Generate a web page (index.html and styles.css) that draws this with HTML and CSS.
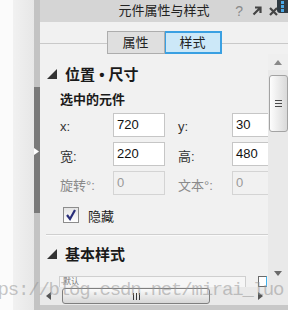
FILE: index.html
```html
<!DOCTYPE html>
<html lang="zh-CN">
<head>
    <meta charset="UTF-8">
    <title>元件属性与样式</title>
    <link rel="stylesheet" href="styles.css">
</head>
<body>
    <div class="screen">
        <div class="edge"></div>
        <div class="dock"></div>
        <div class="splitter">
            <div class="splitter-grip">
                <svg width="5" height="7" viewBox="0 0 5 7"><polygon points="0,0 5,3.5 0,7" fill="#ffffff"/></svg>
            </div>
        </div>
        <div class="panel">
            <div class="titlebar">
                <span></span>
                <span class="title">元件属性与样式</span>
                <span class="title-tools">
                    <span class="tool-help">?</span>
                    <svg width="10" height="10" viewBox="0 0 10 10"><path d="M1.5 8.5 L8 2 M3 1.5 H8.5 V7" stroke="#444" stroke-width="2.2" fill="none"/></svg>
                    <svg width="9" height="9" viewBox="0 0 9 9"><path d="M1 1 L8 8 M8 1 L1 8" stroke="#444" stroke-width="2.2"/></svg>
                </span>
                <!-- dock badge sitting over the close button -->
                <div class="dock-badge"><i></i><i></i><i></i></div>
            </div>

            <div class="tabs">
                <button class="tab">属性</button>
                <button class="tab active">样式</button>
            </div>

            <div class="panel-body">
                <div class="sections">
                    <div class="section-head">
                        <svg width="10" height="10" viewBox="0 0 10 10"><polygon points="10,0 10,10 0,10" fill="#333"/></svg>
                        <span>位置 • 尺寸</span>
                    </div>
                    <div class="subhead">选中的元件</div>

                    <div class="fields">
                        <div class="field-row">
                            <label class="field-label">x:</label>
                            <div class="field-input">720</div>
                            <label class="field-label second">y:</label>
                            <div class="field-input">30</div>
                        </div>
                        <div class="field-row">
                            <label class="field-label">宽:</label>
                            <div class="field-input">220</div>
                            <label class="field-label second">高:</label>
                            <div class="field-input">480</div>
                        </div>
                        <div class="field-row disabled">
                            <label class="field-label">旋转°:</label>
                            <div class="field-input">0</div>
                            <label class="field-label second">文本°:</label>
                            <div class="field-input">0</div>
                        </div>
                    </div>

                    <div class="check-row">
                        <span class="checkbox">
                            <svg width="12" height="12" viewBox="0 0 12 12"><path d="M2 6 L5 10 L10 1" stroke="#2a2f7a" stroke-width="2.2" fill="none"/></svg>
                        </span>
                        <span>隐藏</span>
                    </div>

                    <div class="divider"></div>

                    <div class="section-head">
                        <svg width="10" height="10" viewBox="0 0 10 10"><polygon points="10,0 10,10 0,10" fill="#333"/></svg>
                        <span>基本样式</span>
                    </div>

                    <div class="style-row">
                        <div class="style-box">默认</div>
                        <div class="style-swatch"></div>
                    </div>
                </div>

                <div class="vscroll">
                    <div class="vbtn up"><svg width="8" height="5" viewBox="0 0 8 5"><polygon points="0,5 4,0 8,5" fill="#8a8a8a"/></svg></div>
                    <div class="vtrack">
                        <div class="vthumb"><i></i><i></i><i></i></div>
                    </div>
                    <div class="vbtn down"><svg width="8" height="5" viewBox="0 0 8 5"><polygon points="0,0 8,0 4,5" fill="#6a6a6a"/></svg></div>
                </div>

                <div class="hscroll">
                    <div class="hbtn"><svg width="5" height="8" viewBox="0 0 5 8"><polygon points="5,0 5,8 0,4" fill="#555"/></svg></div>
                    <div class="hthumb"><i></i><i></i><i></i></div>
                    <div class="hbtn right"><svg width="5" height="8" viewBox="0 0 5 8"><polygon points="0,0 5,4 0,8" fill="#555"/></svg></div>
                </div>
                <div class="corner"></div>
            </div>
            <div class="statusbar"></div>
        </div>
        <div class="watermark">https://blog.csdn.net/mirai_luo</div>
    </div>
</body>
</html>
```

FILE: styles.css
```css
body {
    margin: 0;
    font-family: "Liberation Sans", "Noto Sans CJK SC", sans-serif;
    font-size: 13px;
    color: #1e1e1e;
}

.screen {
    position: relative;
    display: flex;
    width: 288px;
    height: 310px;
    overflow: hidden;
    background: #fbfbfb;
}

.edge {
    width: 13px;
    background: #fbfbfb;
}

.dock {
    width: 21px;
    background: linear-gradient(to right, #f1f1f1, #e7e7e7);
}

.splitter {
    width: 6px;
    background: #c3c3c3;
    padding-top: 87px;
}

.splitter-grip {
    height: 126px;
    background: #7a7a7a;
    padding-top: 61px;
    box-sizing: border-box;
}

.splitter-grip svg {
    display: block;
}

.panel {
    flex: 1;
    display: flex;
    flex-direction: column;
    background: #f1f1f1;
}

/* title bar */
.titlebar {
    position: relative;
    height: 22px;
    display: grid;
    grid-template-columns: 1fr auto 1fr;
    align-items: center;
    background: #d5d5d5;
}

.title {
    font-size: 13px;
    line-height: 22px;
    color: #222;
}

.title-tools {
    justify-self: end;
    display: flex;
    align-items: center;
    gap: 7px;
    padding-right: 10px;
}

.tool-help {
    font-size: 14px;
    color: #8a8a8a;
    line-height: 22px;
    margin-right: 2px;
}

.title-tools svg {
    display: block;
}

.dock-badge {
    position: absolute;
    top: 0;
    right: 0;
    width: 11px;
    height: 13px;
    background: #2f3a42;
    border-radius: 0 0 0 3px;
    display: flex;
    flex-direction: column;
    align-items: center;
    gap: 1px;
    padding-top: 1px;
    box-sizing: border-box;
}

.dock-badge i {
    width: 3px;
    height: 3px;
    background: #4aa8e6;
}

/* tabs */
.tabs {
    height: 32px;
    padding-top: 9px;
    box-sizing: border-box;
    display: flex;
    justify-content: center;
    background: linear-gradient(#c9c9c9, #c9c9c9) 0 21px / 100% 1px no-repeat;
}

.tab {
    width: 58px;
    height: 23px;
    margin: 0;
    padding: 0;
    font-family: inherit;
    font-size: 13px;
    color: #222;
    background: #dfdfdf;
    border: 1px solid #adadad;
    line-height: 20px;
}

.tab.active {
    width: 57px;
    background: #cce8f8;
    border: 2px solid #3aa0e2;
    border-left-width: 1px;
}

/* body grid: content, vertical bar, horizontal bar, corner */
.panel-body {
    display: grid;
    grid-template-columns: 228px 20px;
    grid-template-rows: 233px 18px;
}

.sections {
    overflow: hidden;
    padding-top: 9px;
    box-sizing: border-box;
}

.section-head {
    display: flex;
    align-items: center;
    height: 20px;
    padding-left: 7px;
    gap: 8px;
    font-size: 15px;
    font-weight: bold;
    color: #1a1a1a;
    white-space: pre;
}

.section-head svg {
    display: block;
    margin-top: 1px;
}

.subhead {
    margin-top: 8px;
    padding-left: 20px;
    line-height: 18px;
    font-weight: bold;
    color: #1a1a1a;
}

.fields {
    margin-top: 4px;
    padding-left: 20px;
    display: flex;
    flex-direction: column;
    gap: 5px;
}

.field-row {
    display: flex;
    align-items: center;
    height: 24px;
}

.field-label {
    flex: none;
    width: 53px;
    color: #333;
    padding-top: 3px;
}

.field-label.second {
    width: 54px;
    margin-left: 13px;
}

.field-input {
    flex: none;
    width: 52px;
    height: 24px;
    box-sizing: border-box;
    border: 1px solid #c6c6c6;
    background: #fff;
    padding-left: 3px;
    line-height: 22px;
    font-size: 13px;
    color: #111;
}

.field-row.disabled .field-label {
    color: #8a8a8a;
}

.field-row.disabled .field-input {
    background: #f1f1f1;
    border-color: #d4d4d4;
    color: #9a9a9a;
}

.check-row {
    margin-top: 12px;
    padding-left: 23px;
    display: flex;
    align-items: center;
    gap: 9px;
    height: 16px;
}

.checkbox {
    width: 16px;
    height: 16px;
    box-sizing: border-box;
    border: 1px solid #8c8c8c;
    background: linear-gradient(#e4e4e4, #ffffff);
    display: flex;
    align-items: center;
    justify-content: center;
}

.checkbox svg {
    display: block;
}

.divider {
    margin: 11px 0 0 6px;
    height: 1px;
    background: #cfcfcf;
    border-bottom: 1px solid #fafafa;
}

.divider + .section-head {
    margin-top: 7px;
}

.style-row {
    margin-top: 13px;
    padding-left: 19px;
    display: flex;
    gap: 12px;
}

.style-box {
    width: 187px;
    height: 24px;
    box-sizing: border-box;
    border: 1px solid #cfcfcf;
    background: #f6f6f6;
    padding: 1px 0 0 3px;
    font-size: 8px;
    line-height: 8px;
    color: #777;
}

.style-swatch {
    width: 9px;
    height: 11px;
    box-sizing: border-box;
    border: 1px solid #6a6a6a;
    border-right-color: #3fb4f0;
    background: #fff;
}

/* scroll bars */
.vscroll {
    display: flex;
    flex-direction: column;
    background: #e9e9e9;
}

.vbtn {
    height: 16px;
    display: flex;
    align-items: center;
    justify-content: center;
}

.vbtn.up {
    background: #efefef;
}

.vbtn.down {
    margin-bottom: 6px;
}

.vtrack {
    flex: 1;
    padding-top: 5px;
}

.vthumb {
    height: 57px;
    margin-left: 1px;
    box-sizing: border-box;
    border: 1px solid #a3a3a3;
    border-radius: 3px;
    background: linear-gradient(to right, #fdfdfd, #d9d9d9);
    display: flex;
    flex-direction: column;
    align-items: center;
    justify-content: center;
    gap: 2px;
}

.vthumb i {
    width: 7px;
    height: 1px;
    background: #4a4a4a;
}

.hscroll {
    display: flex;
    align-items: center;
    background: #e9e9e9;
}

.hbtn {
    width: 16px;
    display: flex;
    justify-content: center;
}

.hbtn.right {
    margin-left: auto;
}

.hthumb {
    width: 148px;
    height: 16px;
    margin-left: 6px;
    box-sizing: border-box;
    border: 1px solid #7f7f7f;
    border-radius: 3px;
    background: linear-gradient(#fbfbfb, #d6d6d6);
    display: flex;
    justify-content: center;
    align-items: center;
    gap: 2px;
}

.hthumb i {
    width: 1px;
    height: 7px;
    background: #3a3a3a;
}

.corner {
    background: #e9e9e9;
}

.statusbar {
    flex: 1;
    background: #c8c8c8;
}

/* watermark over the screenshot */
.watermark {
    position: absolute;
    left: -33px;
    top: 279px;
    font-family: "Liberation Mono", monospace;
    font-size: 19px;
    letter-spacing: -1.2px;
    line-height: 22px;
    color: rgba(150, 150, 150, 0.55);
    white-space: nowrap;
}
```
